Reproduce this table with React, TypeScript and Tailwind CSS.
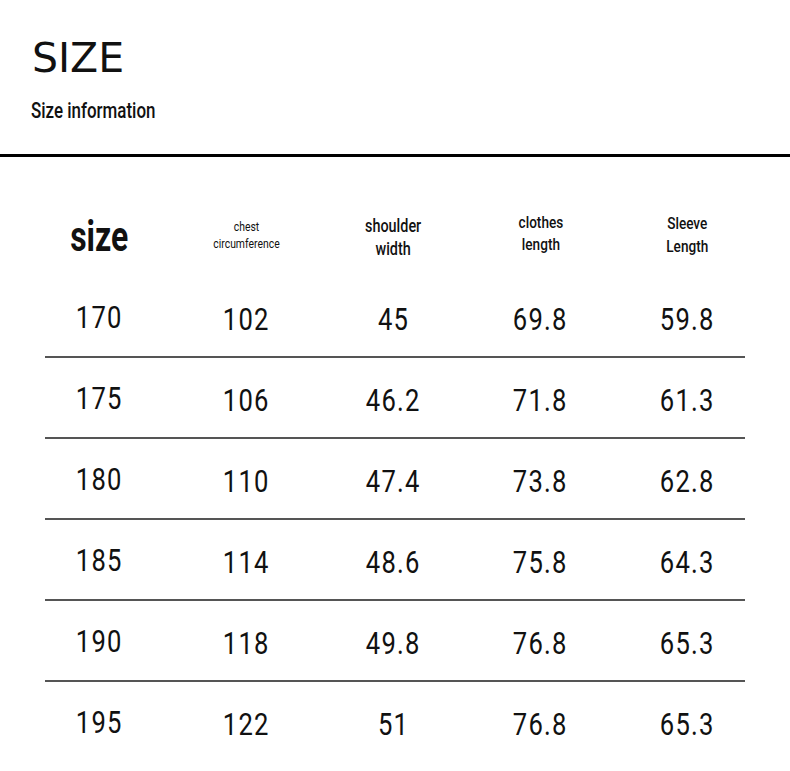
const narrow = "font-['Roboto',sans-serif]";

const rows = [
  ["170", "102", "45", "69.8", "59.8"],
  ["175", "106", "46.2", "71.8", "61.3"],
  ["180", "110", "47.4", "73.8", "62.8"],
  ["185", "114", "48.6", "75.8", "64.3"],
  ["190", "118", "49.8", "76.8", "65.3"],
  ["195", "122", "51", "76.8", "65.3"],
];

const cols = "grid grid-cols-[147px_147px_147px_147px_147px] -mx-[19px]";

// condensed look: Roboto squeezed horizontally
function Sq({ children, className = "" }: { children: React.ReactNode; className?: string }) {
  return <span className={`inline-block scale-x-[0.8] ${className}`}>{children}</span>;
}

export default function App() {
  return (
    <div className="w-[790px] h-[771px] bg-white text-[#111] overflow-hidden">
      {/* Title */}
      <div className="pt-[37px]">
        <h1 className="pl-[32px] text-[41px] leading-[42px] font-['DejaVu_Sans',sans-serif] font-normal">
          SIZE
        </h1>
        <p className={`mt-[21px] pl-[31px] text-[22px] leading-[21px] font-medium ${narrow}`}>
          <Sq className="origin-left scale-x-[0.77]">Size information</Sq>
        </p>
        <div className="mt-[33px] h-[3px] bg-black" />
      </div>

      {/* Table */}
      <div className={`mx-[45px] ${narrow}`}>
        <div className={`${cols} h-[120px] pt-[42px] items-center text-center`}>
          <div className="text-[42px] leading-none font-bold -mt-[2px]">
            <Sq className="scale-x-[0.76]">size</Sq>
          </div>
          <div className="text-[13px] leading-[17px] -mt-[6px]">
            <Sq>
              chest
              <br />
              circumference
            </Sq>
          </div>
          <div className="text-[18px] leading-[23px] font-medium -mt-[2px]">
            <Sq>
              shoulder
              <br />
              width
            </Sq>
          </div>
          <div className="text-[17px] leading-[22px] font-medium -mt-[10px]">
            <Sq>
              clothes
              <br />
              length
            </Sq>
          </div>
          <div className="text-[17px] leading-[23px] font-medium -mt-[6px]">
            <Sq>
              Sleeve
              <br />
              Length
            </Sq>
          </div>
        </div>

        {rows.map((r, i) => (
          <div
            key={r[0]}
            className={i < rows.length - 1 ? "border-b-2 border-[#555]" : ""}
          >
            <div className={`${cols} h-[79px] pt-[4px] items-center text-center text-[32px] leading-none tracking-[1.5px]`}>
              {r.map((v, j) => (
                <div key={j} className={j === 0 ? "-mt-[3px]" : ""}>
                  <Sq>{v}</Sq>
                </div>
              ))}
            </div>
          </div>
        ))}
      </div>
    </div>
  );
}
